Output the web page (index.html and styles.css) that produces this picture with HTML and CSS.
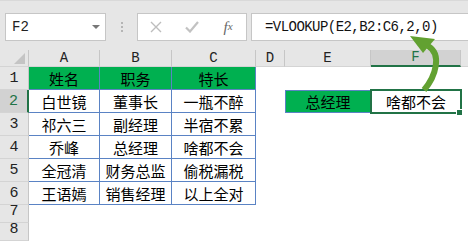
FILE: index.html
```html
<!DOCTYPE html>
<html>
<head>
  <link rel="stylesheet" href="styles.css">
</head>
<body>
  <div class="bar">
    <div class="namebox"><span>F2</span><i class="drop"></i></div>
    <div class="grip"><b></b><b></b><b></b></div>
    <div class="fxbox">
      <span>
        <svg width="12" height="12" viewBox="0 0 12 12"><path d="M1 1L11 11M11 1L1 11" stroke="#bdbdbd" stroke-width="1.4" fill="none"/></svg>
      </span>
      <span>
        <svg width="14" height="12" viewBox="0 0 14 12"><path d="M1 6.5L5 10.5L13 1" stroke="#c2c2c2" stroke-width="2.2" fill="none"/></svg>
      </span>
      <span class="fx">f<sub>x</sub></span>
    </div>
    <div class="formula">=VLOOKUP(E2,B2:C6,2,0)</div>
  </div>

  <div class="sheet">
    <div class="hd corner"><i></i></div>
    <div class="hd">A</div>
    <div class="hd">B</div>
    <div class="hd">C</div>
    <div class="hd">D</div>
    <div class="hd">E</div>
    <div class="hd on">F</div>
    <div class="hd"></div>

    <div class="rh">1</div>
    <div class="c t g">姓名</div>
    <div class="c t g">职务</div>
    <div class="c t g">特长</div>
    <div class="c"></div>
    <div class="c"></div>
    <div class="c"></div>
    <div class="c"></div>

    <div class="rh on">2</div>
    <div class="c t">白世镜</div>
    <div class="c t">董事长</div>
    <div class="c t">一瓶不醉</div>
    <div class="c"></div>
    <div class="c g box">总经理</div>
    <div class="c pick">啥都不会</div>
    <div class="c"></div>

    <div class="rh">3</div>
    <div class="c t">祁六三</div>
    <div class="c t">副经理</div>
    <div class="c t">半宿不累</div>
    <div class="c"></div>
    <div class="c"></div>
    <div class="c"></div>
    <div class="c"></div>

    <div class="rh">4</div>
    <div class="c t">乔峰</div>
    <div class="c t">总经理</div>
    <div class="c t">啥都不会</div>
    <div class="c"></div>
    <div class="c"></div>
    <div class="c"></div>
    <div class="c"></div>

    <div class="rh">5</div>
    <div class="c t">全冠清</div>
    <div class="c t">财务总监</div>
    <div class="c t">偷税漏税</div>
    <div class="c"></div>
    <div class="c"></div>
    <div class="c"></div>
    <div class="c"></div>

    <div class="rh">6</div>
    <div class="c t">王语嫣</div>
    <div class="c t">销售经理</div>
    <div class="c t">以上全对</div>
    <div class="c"></div>
    <div class="c"></div>
    <div class="c"></div>
    <div class="c"></div>

    <div class="rh">7</div>
    <div class="c"></div>
    <div class="c"></div>
    <div class="c"></div>
    <div class="c"></div>
    <div class="c"></div>
    <div class="c"></div>
    <div class="c"></div>

    <div class="rh">8</div>
    <div class="c"></div>
    <div class="c"></div>
    <div class="c"></div>
    <div class="c"></div>
    <div class="c"></div>
    <div class="c"></div>
    <div class="c"></div>
  </div>

  <!-- curved arrow from the result cell up to the column index -->
  <svg class="arrow" width="468" height="241" viewBox="0 0 468 241">
    <path d="M424 90C436 76 442 54 428 46" stroke="#62a131" stroke-width="6" fill="none"/>
    <polygon points="410,36 435,39 423,53" fill="#62a131"/>
  </svg>
</body>
</html>
```

FILE: styles.css
```css
body {
  margin: 0;
  width: 468px;
  height: 241px;
  overflow: hidden;
  position: relative;
  background: #fff;
  font-family: "Noto Sans CJK SC", sans-serif;
}

.bar {
  display: flex;
  align-items: flex-start;
  height: 50px;
  box-sizing: border-box;
  padding: 12px 0 0 5px;
  background: #e6e6e6;
  border-top: 1px solid #d9d9d9;
}

.namebox {
  width: 101px;
  height: 28px;
  box-sizing: border-box;
  border: 1px solid #c6c6c6;
  background: #fff;
  display: flex;
  align-items: center;
  justify-content: space-between;
  padding: 0 5px 0 6px;
  font: 14px "Liberation Mono", monospace;
  color: #222;
}

.drop {
  border-left: 4px solid transparent;
  border-right: 4px solid transparent;
  border-top: 4px solid #777;
}

.grip {
  width: 31px;
  height: 28px;
  display: flex;
  flex-direction: column;
  align-items: center;
  justify-content: center;
  gap: 2px;
}

.grip b {
  width: 2px;
  height: 2px;
  background: #b5b5b5;
}

.fxbox {
  width: 110px;
  height: 28px;
  box-sizing: border-box;
  border: 1px solid #c6c6c6;
  background: #fff;
  display: flex;
  align-items: center;
}

.fxbox span {
  width: 36px;
  display: flex;
  justify-content: center;
}

.fx {
  font: italic 15px "Liberation Serif", serif;
  color: #666;
}

.fx sub {
  font-size: 11px;
  vertical-align: baseline;
  position: relative;
  top: 1px;
}

.formula {
  margin-left: 4px;
  flex: 1;
  height: 28px;
  box-sizing: border-box;
  border: 1px solid #c6c6c6;
  border-right: none;
  background: #fff;
  padding-left: 13px;
  display: flex;
  align-items: center;
  font: 14px "Liberation Mono", monospace;
  letter-spacing: -0.55px;
  color: #111;
}

.sheet {
  display: grid;
  grid-template-columns: 29px 71px 72px 84px 29px 86px 90px 30px;
  grid-template-rows: 17px repeat(6, 23px) 18px 18px;
}

.hd {
  background: #e6e6e6;
  border-right: 1px solid #c6c6c6;
  border-bottom: 1px solid #d4d4d4;
  display: flex;
  align-items: flex-end;
  justify-content: center;
  font: 14px "Liberation Mono", monospace;
  line-height: 16px;
  color: #222;
}

.corner {
  position: relative;
}

.corner i {
  position: absolute;
  right: 3px;
  bottom: 2px;
  border-left: 11px solid transparent;
  border-bottom: 11px solid #c4c4c4;
}

.hd.on {
  background: #d2d2d2;
  color: #217346;
  border-bottom: 2px solid #217346;
}

.rh {
  background: #e6e6e6;
  border-right: 1px solid #c6c6c6;
  border-bottom: 1px solid #d4d4d4;
  display: flex;
  align-items: flex-end;
  justify-content: center;
  font: 15px "Liberation Mono", monospace;
  line-height: 16px;
  padding-bottom: 2px;
  box-sizing: border-box;
  color: #222;
}

.rh.on {
  background: #d2d2d2;
  color: #217346;
  border-right: 2px solid #217346;
}

.c {
  display: flex;
  align-items: center;
  justify-content: center;
  font-size: 15px;
  color: #000;
  box-sizing: border-box;
}

.t {
  border-right: 1px solid #5a83c4;
  border-bottom: 1px solid #5a83c4;
}

.g {
  background: #00b050;
}

.box {
  border: 1px solid #5a83c4;
}

.pick {
  position: relative;
}

.pick::after {
  content: "";
  position: absolute;
  left: -1px;
  top: -1px;
  right: -1px;
  bottom: -1px;
  border: 2px solid #217346;
}

.pick::before {
  content: "";
  position: absolute;
  right: -2px;
  bottom: -3px;
  width: 5px;
  height: 5px;
  background: #217346;
  border: 1px solid #fff;
  z-index: 1;
}

.arrow {
  position: absolute;
  left: 0;
  top: 0;
  pointer-events: none;
}
```
